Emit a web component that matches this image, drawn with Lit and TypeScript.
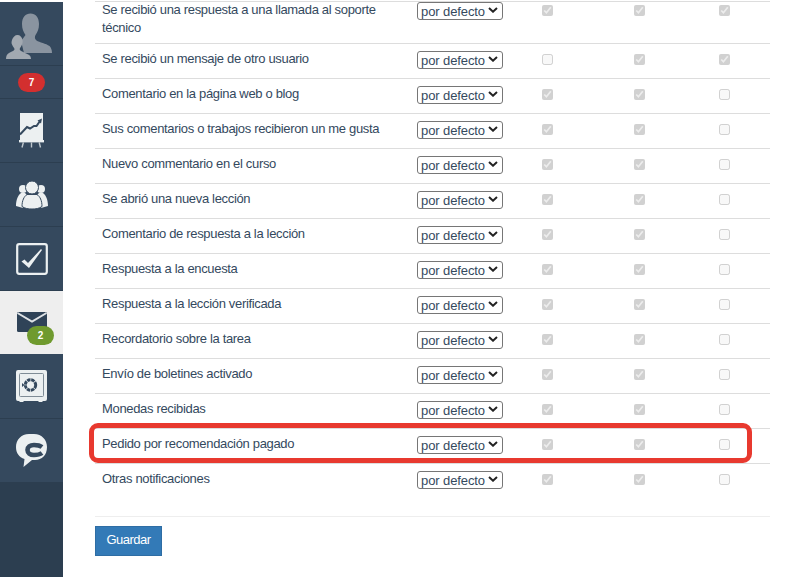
import { LitElement, html, css, svg } from "lit";
import { customElement } from "lit/decorators.js";

const rows: [string, boolean, boolean, boolean][] = [
  ["Se recibió una respuesta a una llamada al soporte técnico", true, true, true],
  ["Se recibió un mensaje de otro usuario", false, true, true],
  ["Comentario en la página web o blog", true, true, false],
  ["Sus comentarios o trabajos recibieron un me gusta", true, true, false],
  ["Nuevo commentario en el curso", true, true, false],
  ["Se abrió una nueva lección", true, true, false],
  ["Comentario de respuesta a la lección", true, true, false],
  ["Respuesta a la encuesta", true, true, false],
  ["Respuesta a la lección verificada", true, true, false],
  ["Recordatorio sobre la tarea", true, true, false],
  ["Envío de boletines activado", true, true, false],
  ["Monedas recibidas", true, true, false],
  ["Pedido por recomendación pagado", true, true, false],
  ["Otras notificaciones", true, true, false],
];

const avatar = svg`<svg width="63" height="63" viewBox="0 2 63 63"><path d="M25.500 35C23.500 32 22 29 22 24c0-6.500 3.500-10.500 8.500-10.500S39 17.500 39 24c0 5-1.500 8-3.500 11-1 2-.8 4 1 5.500 3 2 9.500 3 13 5.500 1.500 1.500 2.500 4 2.500 7H24l-3-12z" fill="#8a94a0"/><path d="M6 59c0-3 1-5 3-6 2.500-1.500 5-2 5.500-3.500.3-1.500-1.500-2.500-2.500-5-.7-1.500-.5-3 0-4.500 1-3 3-5 5.500-5s4.500 2 5 5c.3 1.500.2 3-.5 4.500-1 2.500-2.500 3.500-2.300 5 .5 1.500 2.800 2 5.300 3.500 3 1.500 6 2 6 6z" fill="#a2a9b1"/></svg>`;

const chart = svg`<svg width="26" height="36" viewBox="0 0 26 36"><rect x="1" y="0" width="23" height="27" fill="#ecf0f1"/><rect x="0" y="27" width="25" height="2.400" fill="#ecf0f1"/><path d="M3 34.500 4.400 29.500M12.500 29.500V34.500M21.500 34.500 20.200 29.500" stroke="#ecf0f1" stroke-width="1.400" fill="none" opacity=".75"/><path d="M1 21.500 8 14 11 15.500 15 13 17.500 13 21 8" stroke="#35495e" stroke-width="2" fill="none"/><path d="M23 5.500 22 10.500 18.500 7.500z" fill="#35495e"/></svg>`;

const users = svg`<svg width="32" height="28" viewBox="0 0 32 28"><g fill="#ecf0f1"><circle cx="7" cy="8" r="4"/><circle cx="25" cy="8" r="4"/><path d="M5 12h4l2 2-4 13-7-2c0-6 2-11 5-13zM27 12h-4l-2 2 4 13 7-2c0-6-2-11-5-13z"/><circle cx="16" cy="6.500" r="6.500" stroke="#35495e" stroke-width="1"/><path d="M11 13.500h10c3 2 5 6 5 12-3 2-6 2.500-10 2.500s-7-.5-10-2.500c0-6 2-10 5-12z" stroke="#35495e" stroke-width="1"/></g></svg>`;

const check = svg`<svg width="32" height="32" viewBox="0 0 32 32"><rect x="1.200" y="1.200" width="29.600" height="29.600" rx="2" fill="none" stroke="#ecf0f1" stroke-width="2.200"/><path d="M5.500 18.500 8.500 16.500 12 20 25 6 26 7 13 25z" fill="#ecf0f1"/></svg>`;

const mail = svg`<svg width="30" height="20" viewBox="0 0 30 20"><rect width="30" height="20" rx="1.500" fill="#2f4358"/><path d="M.5 1 15 9.500 29.500 1" stroke="#dfe3e6" stroke-width="2" fill="none"/></svg>`;

const safe = svg`<svg width="31" height="32" viewBox="0 0 31 32"><path d="M2 0h27a2 2 0 0 1 2 2v27a2 2 0 0 1-2 2h-2l-1 1h-3l-1-1H8l-1 1H4l-1-1H2a2 2 0 0 1-2-2V2a2 2 0 0 1 2-2z" fill="#ecf0f1"/><rect x="3.500" y="3.500" width="24" height="23" rx="1" fill="none" stroke="#7f8c96" stroke-width="1"/><circle cx="14.500" cy="15" r="5.200" fill="none" stroke="#35495e" stroke-width="3" stroke-dasharray="3.400 .7"/><path d="M6 13l2.500 2L6 17z" fill="#35495e"/></svg>`;

const chat = svg`<svg width="31" height="33" viewBox="0 0 31 33"><path d="M13 0h5c8 0 13 6 13 13 0 8-5 13-12 13h-3l-8.500 7 1-8C3 23 0 19 0 13 0 6 5 0 13 0z" fill="#ecf0f1"/><path d="M26 13C24 11.500 21 11 18 11c-4 0-6.500 2-6.500 5s2.500 5 6.500 5c3 0 6-.5 8-2" fill="none" stroke="#35495e" stroke-width="4.600"/></svg>`;

const chevron = svg`<svg class="chev" width="10" height="6" viewBox="0 0 10 6"><path d="M1 1 5 4.700 9 1" fill="none" stroke="#222" stroke-width="2"/></svg>`;

@customElement("app-root")
export class AppRoot extends LitElement {
  static styles = css`
    :host {
      display: block;
      width: 790px;
      height: 577px;
      overflow: hidden;
      background: #fff;
      font-family: "Liberation Sans", Arial, sans-serif;
      font-size: 13px;
      letter-spacing: -0.33px;
      color: #34495e;
      position: relative;
    }
    .page { display: flex; height: 577px; }
    .side {
      width: 63px;
      flex: none;
      margin-top: 2px;
      background: #2c3e50;
      display: flex;
      flex-direction: column;
      letter-spacing: 0;
    }
    .item {
      background: #35495e;
      border-bottom: 1px solid #2c3e50;
      display: flex;
      align-items: center;
      justify-content: center;
      position: relative;
      box-sizing: border-box;
      height: 64px;
    }
    .item.active { background: #eee; border-bottom-color: #eee; height: 63px; }
    .item.badge { height: 33px; }
    .item.tall { height: 65px; }
    .pill {
      background: #d32f2f;
      color: #fff;
      font-weight: bold;
      font-size: 10px;
      width: 27px;
      height: 19px;
      border-radius: 10px;
      display: flex;
      align-items: center;
      justify-content: center;
    }
    .pill.green {
      position: absolute;
      left: 27px;
      top: 35px;
      background: #6f9a2e;
    }
    .main {
      width: 675px;
      margin-left: 32px;
      padding-top: 1px;
    }
    .row {
      display: grid;
      grid-template-columns: 322px 92px 77px 106px 65px 13px;
      border-top: 1px solid #ddd;
      height: 35px;
      box-sizing: border-box;
    }
    .row.first { height: 42px; }
    .row.last { height: 54px; border-bottom: 1px solid #eee; }
    .label { padding: 6px 7px 0; line-height: 18px; }
    .row.first .label { padding-top: 0; margin-top: -1px; }
    .selcell { position: relative; height: 25px; padding-top: 7px; box-sizing: border-box; }
    .row.first .selcell { padding-top: 0; height: 18px; }
    select {
      appearance: none;
      display: block;
      font-family: "Liberation Sans", Arial, sans-serif;
      font-size: 13px;
      letter-spacing: -0.1px;
      width: 86px;
      height: 18px;
      margin: 0;
      padding: 0 0 0 3px;
      border: 1px solid #767676;
      border-radius: 3px;
      color: #34495e;
      background: #fff;
      opacity: 1;
    }
    .chev { position: absolute; left: 71px; top: 12px; pointer-events: none; }
    .row.first .chev { top: 5px; }
    .chk { padding-top: 10px; display: flex; justify-content: center; }
    .row.first .chk { padding-top: 3px; }
    .chk input { margin: 0; width: 11px; height: 11px; }
    button {
      display: block;
      margin-top: 9px;
      width: 67px;
      height: 30px;
      background: #337ab7;
      border: 1px solid #2e6da4;
      color: #fff;
      font: 13px "Liberation Sans", Arial, sans-serif;
      letter-spacing: -0.5px;
      padding: 0 0 3px;
    }
    .mark {
      position: absolute;
      left: 89px;
      top: 423px;
      width: 663px;
      height: 40px;
      box-sizing: border-box;
      border: 5px solid #e8392f;
      border-radius: 9px;
      pointer-events: none;
    }
  `;

  render() {
    return html`<div class="page">
      <nav class="side">
        <div class="item">${avatar}</div>
        <div class="item badge"><span class="pill">7</span></div>
        <div class="item">${chart}</div>
        <div class="item">${users}</div>
        <div class="item">${check}</div>
        <div class="item active">${mail}<span class="pill green">2</span></div>
        <div class="item tall">${safe}</div>
        <div class="item">${chat}</div>
      </nav>
      <main class="main">
        ${rows.map(
          (r, i) => html`<div class="row ${i === 0 ? "first" : ""} ${i === rows.length - 1 ? "last" : ""}">
            <div class="label">${r[0]}</div>
            <div class="selcell"><select><option>por defecto</option></select>${chevron}</div>
            ${[r[1], r[2], r[3]].map(
              (c) => html`<div class="chk"><input type="checkbox" disabled .checked=${c} /></div>`
            )}
          </div>`
        )}
        <button>Guardar</button>
      </main>
    </div>
    <div class="mark"></div>`;
  }
}
